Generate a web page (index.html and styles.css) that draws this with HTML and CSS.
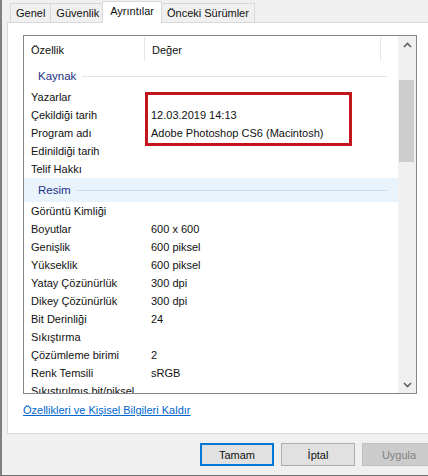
FILE: index.html
```html
<!DOCTYPE html>
<html lang="tr">
<head>
    <meta charset="UTF-8">
    <meta name="viewport" content="width=device-width, initial-scale=1.0">
    <title>Ayrıntılar</title>
    <link rel="stylesheet" href="styles.css">
</head>
<body>
    <div class="window">
        <div class="tabs">
            <div class="tab">Genel</div>
            <div class="tab">Güvenlik</div>
            <div class="tab active">Ayrıntılar</div>
            <div class="tab">Önceki Sürümler</div>
        </div>
        <div class="panel">
            <div class="list">
                <div class="list-body">
                    <div class="list-head">
                        <div class="col-name">Özellik</div>
                        <div class="col-value">Değer</div>
                    </div>
                    <div class="group"><span>Kaynak</span><i></i></div>
                    <div class="highlight-wrap">
                        <div class="row"><div class="col-name">Yazarlar</div><div class="col-value"></div></div>
                        <div class="row"><div class="col-name">Çekildiği tarih</div><div class="col-value">12.03.2019 14:13</div></div>
                        <div class="row"><div class="col-name">Program adı</div><div class="col-value">Adobe Photoshop CS6 (Macintosh)</div></div>
                        <div class="row"><div class="col-name">Edinildiği tarih</div><div class="col-value"></div></div>
                        <div class="row"><div class="col-name">Telif Hakkı</div><div class="col-value"></div></div>
                        <div class="red-box"></div>
                    </div>
                    <div class="group hover"><span>Resim</span><i></i></div>
                    <div class="row"><div class="col-name">Görüntü Kimliği</div><div class="col-value"></div></div>
                    <div class="row"><div class="col-name">Boyutlar</div><div class="col-value">600 x 600</div></div>
                    <div class="row"><div class="col-name">Genişlik</div><div class="col-value">600 piksel</div></div>
                    <div class="row"><div class="col-name">Yükseklik</div><div class="col-value">600 piksel</div></div>
                    <div class="row"><div class="col-name">Yatay Çözünürlük</div><div class="col-value">300 dpi</div></div>
                    <div class="row"><div class="col-name">Dikey Çözünürlük</div><div class="col-value">300 dpi</div></div>
                    <div class="row"><div class="col-name">Bit Derinliği</div><div class="col-value">24</div></div>
                    <div class="row"><div class="col-name">Sıkıştırma</div><div class="col-value"></div></div>
                    <div class="row"><div class="col-name">Çözümleme birimi</div><div class="col-value">2</div></div>
                    <div class="row"><div class="col-name">Renk Temsili</div><div class="col-value">sRGB</div></div>
                    <div class="row"><div class="col-name">Sıkıştırılmış bit/piksel</div><div class="col-value"></div></div>
                </div>
                <div class="scrollbar">
                    <div class="arrow">
                        <svg width="9" height="6" viewBox="0 0 9 6"><path d="M1 5 L4.5 1.5 L8 5" fill="none" stroke="#606060" stroke-width="1.6"/></svg>
                    </div>
                    <div class="track"><div class="thumb"></div></div>
                    <div class="arrow">
                        <svg width="9" height="6" viewBox="0 0 9 6"><path d="M1 1 L4.5 4.5 L8 1" fill="none" stroke="#606060" stroke-width="1.6"/></svg>
                    </div>
                </div>
            </div>
            <a class="remove-link" href="#">Özellikleri ve Kişisel Bilgileri Kaldır</a>
        </div>
        <div class="buttons">
            <button class="btn default">Tamam</button>
            <button class="btn">İptal</button>
            <button class="btn disabled">Uygula</button>
        </div>
    </div>
</body>
</html>
```

FILE: styles.css
```css
body {
    margin: 0;
    padding: 0;
    background-color: #f0f0f0;
    font-family: 'Liberation Sans', Arial, sans-serif;
    font-size: 11px;
    color: #111;
}
.window {
    height: 475px;
    border-left: 2px solid #7f7f7f;
    border-bottom: 1px solid #6f6f6f;
    overflow: hidden;
}
.tabs {
    display: flex;
    align-items: flex-end;
    height: 22px;
    padding-left: 8px;
}
.tab {
    height: 18px;
    line-height: 18px;
    padding: 0 5px;
    border: 1px solid #d9d9d9;
    border-bottom: none;
    margin-right: -1px;
    background-color: #f0f0f0;
}
.tab.active {
    position: relative;
    height: 21px;
    line-height: 19px;
    margin: 0 -1px -1px -2px;
    padding: 0 7px;
    background-color: #fff;
    z-index: 1;
}
.panel {
    margin-left: 5px;
    height: 412px;
    background-color: #fff;
    border: 1px solid #d9d9d9;
    border-right: none;
    padding: 12px 0 0 15px;
    box-sizing: border-box;
}
.list {
    display: flex;
    width: 394px;
    height: 359px;
    border: 1px solid #828790;
    box-sizing: border-box;
}
.list-body {
    flex: 1;
    overflow: hidden;
}
.list-head {
    display: flex;
    height: 26px;
    align-items: center;
    margin-bottom: 2px;
}
.list-head .col-name,
.list-head .col-value {
    height: 24px;
    line-height: 26px;
    border-right: 1px solid #e5e5e5;
}
.list-head .col-value {
    width: 228px;
    flex: none;
}
.col-name {
    width: 113px;
    padding-left: 7px;
    white-space: nowrap;
    flex: none;
}
.col-value {
    padding-left: 7px;
    white-space: nowrap;
}
.group {
    display: flex;
    align-items: center;
    height: 24px;
    padding-left: 14px;
    padding-right: 11px;
    color: #1e3287;
    font-size: 11.5px;
}
.group i {
    flex: 1;
    height: 1px;
    margin-left: 6px;
    background-color: #dfe3ea;
}
.group.hover {
    background-color: #e8f3fc;
}
.group.hover i {
    background-color: #c9dcec;
}
.highlight-wrap {
    position: relative;
}
.row {
    display: flex;
    height: 18px;
    line-height: 18px;
}
.red-box {
    position: absolute;
    left: 121px;
    top: 4px;
    width: 207px;
    height: 54px;
    border: 3px solid #c2151d;
    box-sizing: border-box;
}
.scrollbar {
    width: 18px;
    display: flex;
    flex-direction: column;
    background-color: #f0f0f0;
}
.arrow {
    height: 17px;
    display: flex;
    align-items: center;
    justify-content: center;
}
.track {
    flex: 1;
    padding-top: 27px;
}
.thumb {
    margin-left: 1px;
    width: 15px;
    height: 82px;
    background-color: #cdcdcd;
}
.remove-link {
    display: inline-block;
    margin-top: 10px;
    color: #0066cc;
    text-decoration: underline;
}
.buttons {
    display: flex;
    gap: 7px;
    padding: 9px 0 0 198px;
}
.btn {
    flex: none;
    width: 74px;
    height: 23px;
    font-family: inherit;
    font-size: 11px;
    color: #111;
    background-color: #e1e1e1;
    border: 1px solid #adadad;
    padding: 0;
}
.btn.default {
    border: 2px solid #0078d7;
}
.btn.disabled {
    background-color: #cccccc;
    border-color: #bfbfbf;
    color: #838383;
}
```
